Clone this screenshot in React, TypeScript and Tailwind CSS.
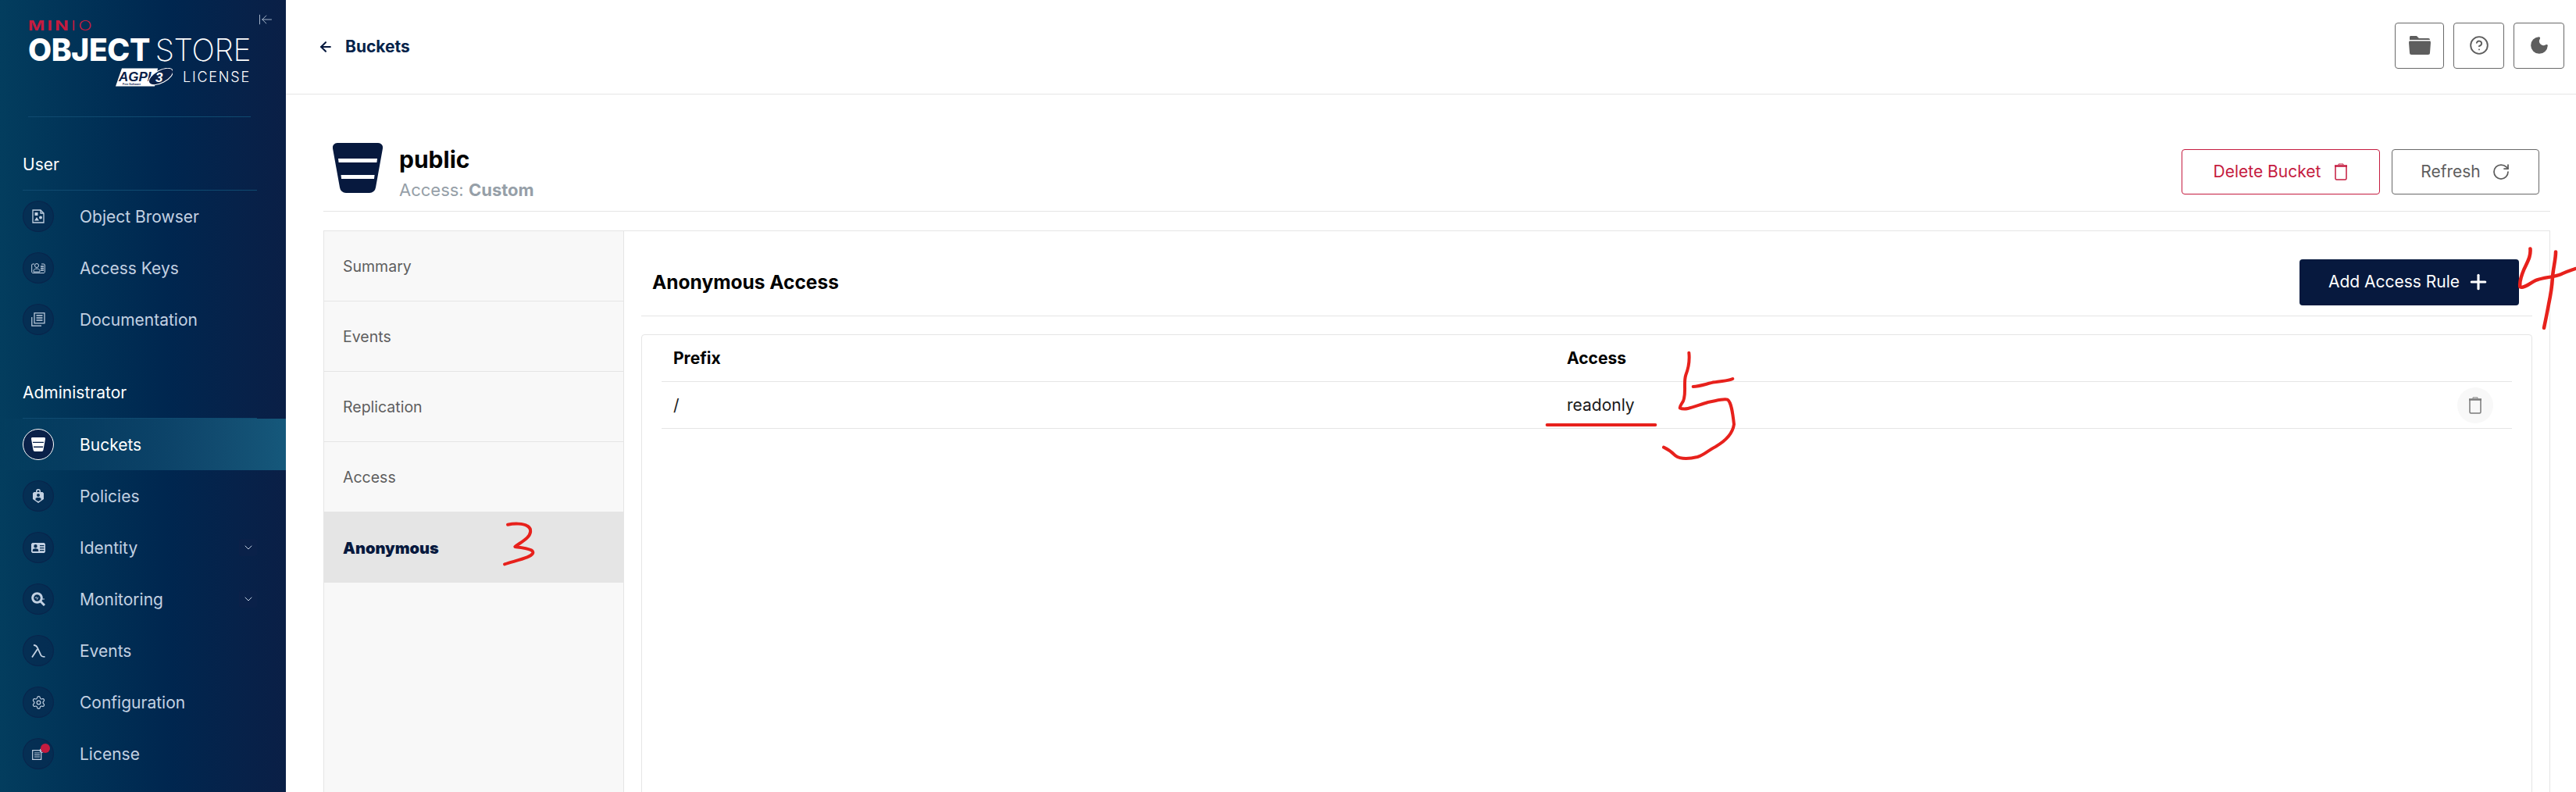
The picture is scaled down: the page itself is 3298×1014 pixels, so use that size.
import React from 'react';
import { ArrowLeft, ArrowLeftToLine, ChevronDown, CircleHelp, Moon, Plus, RotateCw, Settings } from 'lucide-react';

const BucketIcon = ({ className }: { className?: string }) => (
  <svg viewBox="0 0 64 64" className={className} fill="currentColor">
    <path fillRule="evenodd" d="M6 0H58a6 6 0 0 1 6 7L55 57a8 8 0 0 1-8 7H17a8 8 0 0 1-8-7L0 7a6 6 0 0 1 6-7ZM7 20l.6 5H56.400l.6-5ZM10.500 41l.6 5H53l.6-5Z" />
  </svg>
);

const TrashIcon = ({ className }: { className?: string }) => (
  <svg viewBox="0 0 18 22" className={className} fill="none" stroke="currentColor">
    <path d="M1 3.500h16" strokeWidth="2.500" />
    <path d="M6 2V1h6v1" strokeWidth="1" />
    <path d="M2 4v15.500A1.500 1.500 0 0 0 3.500 21h11a1.500 1.500 0 0 0 1.500-1.500V4" strokeWidth="1.500" />
  </svg>
);

const ObjectIcon = () => (
  <svg viewBox="0 0 16 18" className="w-[16px] h-[18px]" fill="none" stroke="currentColor" strokeWidth="1.300">
    <path d="M1 1h10l4 4v12H1Z" />
    <path d="M11 1v4h4" />
    <rect x="3.500" y="4" width="4" height="4" fill="currentColor" stroke="none" />
    <circle cx="11" cy="10.500" r="2" fill="currentColor" stroke="none" />
    <path d="M6 10l3 4.500H3Z" fill="currentColor" stroke="none" />
  </svg>
);

const KeysIcon = () => (
  <svg viewBox="0 0 18 14" className="w-[18px] h-[14px]" fill="none" stroke="currentColor" strokeWidth="1">
    <path d="M4 2H1.500L.7 3v9.500l.8 1h15l.8-1V3l-.8-1H13" />
    <circle cx="7" cy="4" r="2.500" />
    <path d="M3 12v-1.500C3 9 5 8 7 8s4 1 4 2.500V12Z" />
    <path d="M12 5h4M12 7.500h4M12 10h4" strokeWidth="1.400" />
  </svg>
);

const DocsIcon = () => (
  <svg viewBox="0 0 18 18" className="w-[18px] h-[18px]" fill="none" stroke="currentColor" strokeWidth="1.200">
    <path d="M.8 6v11.200H13" />
    <rect x="4" y=".8" width="13" height="13" />
    <path d="M6.500 4h8M6.500 7h8M6.500 10h8" strokeWidth="1.400" />
  </svg>
);

const PolicyIcon = () => (
  <svg viewBox="0 0 14 18" className="w-[14px] h-[18px]" fill="currentColor">
    <path fillRule="evenodd" d="M4 4V3a3 3 0 0 1 6 0v1h2.500L14 5.500V13l-7 5-7-5V5.500L1.500 4ZM5.500 4h3V3a1.500 1.500 0 0 0-3 0ZM7 6a2 2 0 1 0 0 4 2 2 0 0 0 0-4ZM3.500 14l3.500 2 3.500-2v-1.500C10.500 11.500 9 11 7 11s-3.500.5-3.500 1.500Z" />
  </svg>
);

const IdentityIcon = () => (
  <svg viewBox="0 0 18 13" className="w-[18px] h-[13px]" fill="currentColor">
    <path fillRule="evenodd" d="M1.500 0h15L18 1.500v10L16.500 13h-15L0 11.500v-10ZM5.500 2a2.200 2.200 0 1 0 0 4.400 2.200 2.200 0 0 0 0-4.400ZM1.800 11h7.400V9.500C9.200 8 7.500 7.300 5.500 7.300S1.800 8 1.800 9.500ZM11 3v1.300h5.500V3ZM11 6v1.300h5.500V6ZM11 9v1.300h5.500V9Z" />
  </svg>
);

const MonitorIcon = () => (
  <svg viewBox="0 0 18 18" className="w-[18px] h-[18px]" fill="none" stroke="currentColor">
    <circle cx="7.500" cy="7.500" r="5.800" strokeWidth="3" />
    <path d="M11.500 11.500l5.500 5.500" strokeWidth="3" />
    <path d="M5 8l1.500-2 1 3.500 1.500-3" strokeWidth=".8" />
    <path d="M14 9h3" strokeWidth="1" />
  </svg>
);

const LambdaIcon = () => (
  <svg viewBox="0 0 18 17" className="w-[18px] h-[17px]" fill="none" stroke="currentColor" strokeWidth="1.800">
    <path d="M3 1c3 0 4 1 5 3.500L12.500 14c.5 1.300 1.500 1.800 5 1.800" />
    <path d="M8 6L1 16.500" />
  </svg>
);

const LicenseIcon = () => (
  <svg viewBox="0 0 16 15" className="w-[16px] h-[15px]" fill="none" stroke="currentColor" strokeWidth="1.200">
    <path d="M.7 2.700h11v11.600H.7Z" />
    <path d="M3 6h7M3 8.500h7M3 11h7" />
    <circle cx="12.500" cy="3" r="2.500" strokeWidth="1" />
  </svg>
);

const Side = ({ label, icon, active, chevron, dot }: { label: string; icon: React.ReactNode; active?: boolean; chevron?: boolean; dot?: boolean }) => (
  <div className={`h-[66px] flex items-center pl-[29px] pr-[37px] ${active ? 'bg-gradient-to-r from-transparent to-[#15587b] text-white' : 'text-[#c3d1e2]'}`}>
    <div className={`relative w-[40px] h-[40px] rounded-full flex items-center justify-center shrink-0 ${active ? 'bg-[#0a2149] border border-white' : 'bg-[#0a2149]/40 border border-[#0a2149]/70'}`}>
      {icon}
      {dot && <span className="absolute top-[6px] right-[4px] w-[12px] h-[12px] rounded-full bg-[#c51b3f]" />}
    </div>
    <span className="ml-[33px] text-[21px] leading-none">{label}</span>
    {chevron && (
      <span className="ml-auto w-[23px] h-[22px] rounded-[2px] bg-[#0a2149] flex items-center justify-center">
        <ChevronDown size={16} strokeWidth={1.5} />
      </span>
    )}
  </div>
);

const Section = ({ label }: { label: string }) => (
  <div className="mt-[45px] mx-[29px] w-[300px] pb-[16px] border-b border-[#0f4a70] text-white text-[21px] leading-[32px]">{label}</div>
);

const Logo = () => (
  <div className="relative h-[150px] mx-[36px] w-[285px] border-b border-[#0f4a70] text-white">
    <div className="pt-[23px] h-[45px] text-[#c51b3f] text-[17px] leading-[20px] font-bold tracking-[0.14em]">
      <span className="inline-block origin-left scale-x-[1.35]">MIN<span className="font-light">IO</span></span>
    </div>
    <div className="flex justify-between h-[38px] text-[39px] leading-[38px] tracking-[-0.01em]">
      <span className="font-extrabold">OBJECT</span>
      <span className="font-extralight">STORE</span>
    </div>
    <div className="flex items-center justify-end h-[30px] mt-[1px]">
      <svg viewBox="0 0 73 24" className="w-[73px] h-[24px] mr-[13px]">
        <path d="M8 .500H54L50 23.500H0Z" fill="#fff" />
        <text x="4" y="17" fontFamily="Liberation Sans" fontSize="17" fontStyle="italic" fontWeight="700" fill="#0a2149">AGPL</text>
        <text x="9" y="22" fontFamily="Liberation Sans" fontSize="3.500" fontWeight="700" fill="#0a2149">Free Software</text>
        <ellipse cx="58" cy="11" rx="17" ry="8" transform="rotate(-28 58 11)" fill="#0a2149" stroke="#fff" strokeWidth="1" />
        <text x="51" y="18" fontFamily="Liberation Sans" fontSize="17" fontWeight="700" fontStyle="italic" fill="#fff">3</text>
      </svg>
      <span className="text-[18px] leading-none tracking-[0.1em] font-light">LICENSE</span>
    </div>
  </div>
);

const Scribbles = () => (
  <>
    <svg viewBox="0 0 1500 1362" className="absolute left-[400px] top-[560px] w-[500px] h-[454px]" fill="none" stroke="#e7211c" strokeWidth="12" strokeLinecap="round" strokeLinejoin="round">
      <path d="M750 335C775 330 810 330 825 340C845 352 838 372 825 385C810 400 790 410 778 420C795 422 825 425 840 433C855 442 845 452 825 460C800 470 765 478 738 487" />
    </svg>
    <svg viewBox="0 0 1562 870" preserveAspectRatio="none" className="absolute left-[2750px] top-[290px] w-[548px] h-[290px]" fill="none" stroke="#e7211c" strokeWidth="13" strokeLinecap="round" strokeLinejoin="round">
      <path d="M1395 85C1398 115 1385 135 1372 165C1362 190 1355 215 1358 232C1372 240 1395 215 1420 205C1450 195 1480 195 1510 182C1530 172 1545 168 1560 162" />
      <path d="M1488 97C1488 130 1478 160 1476 200C1474 240 1468 270 1462 300C1456 335 1450 365 1445 390" />
    </svg>
    <svg viewBox="0 0 1200 660" className="absolute left-[1900px] top-[400px] w-[400px] h-[220px]" fill="none" stroke="#e7211c" strokeWidth="12" strokeLinecap="round" strokeLinejoin="round">
      <path d="M242 432H658" />
      <path d="M787 155C790 185 785 215 775 240C765 270 778 310 765 340C760 350 752 358 752 367C775 378 810 360 860 345C890 340 920 330 935 335C950 345 955 385 960 430C955 465 925 495 890 515C860 530 850 545 820 555C790 562 755 565 735 550C720 535 705 525 690 518" />
      <path d="M803 285C830 285 860 272 885 268C910 262 935 265 955 255" />
    </svg>
  </>
);

export default function App() {
  return (
    <div className="relative flex h-screen w-full overflow-hidden bg-white text-black font-['Inter',sans-serif]">
      <aside className="relative w-[366px] shrink-0 bg-gradient-to-r from-[#033d5e] via-[#00264f] via-60% to-[#0a1f46]">
        <Logo />
        <button className="absolute top-[15px] right-[16px] text-[#c3d1e2]">
          <ArrowLeftToLine size={20} strokeWidth={1} />
        </button>
        <Section label="User" />
        <Side label="Object Browser" icon={<ObjectIcon />} />
        <Side label="Access Keys" icon={<KeysIcon />} />
        <Side label="Documentation" icon={<DocsIcon />} />
        <Section label="Administrator" />
        <Side label="Buckets" active icon={<BucketIcon className="w-[18px] h-[18px]" />} />
        <Side label="Policies" icon={<PolicyIcon />} />
        <Side label="Identity" chevron icon={<IdentityIcon />} />
        <Side label="Monitoring" chevron icon={<MonitorIcon />} />
        <Side label="Events" icon={<LambdaIcon />} />
        <Side label="Configuration" icon={<Settings size={19} strokeWidth={1.5} />} />
        <Side label="License" dot icon={<LicenseIcon />} />
      </aside>

      <main className="flex-1 min-w-0 flex flex-col">
        <div className="h-[121px] shrink-0 flex items-center justify-between border-b border-[#e5e5e5] pl-[41px] pr-[15px]">
          <div className="flex items-center text-[#07193e]">
            <ArrowLeft size={20} strokeWidth={2.5} />
            <span className="ml-[15px] text-[21px] font-bold text-[#04234a]">Buckets</span>
          </div>
          <div className="flex gap-[12px] text-[#5e5e5e] -mt-[4px]">
            <button className="w-[63px] h-[59px] border border-[#696969] rounded-[4px] flex items-center justify-center">
              <svg viewBox="0 0 28 24" className="w-[28px] h-[24px]" fill="currentColor">
                <path d="M2 0h8l3 3h12a2 2 0 0 1 2 2H1V2a2 2 0 0 1 1-2Z" />
                <path d="M.5 6.500h27l.5 2-1 13a2.500 2.500 0 0 1-2.500 2.500h-21A2.500 2.500 0 0 1 1 21.500L0 8.500Z" />
              </svg>
            </button>
            <button className="w-[65px] h-[59px] border border-[#696969] rounded-[4px] flex items-center justify-center">
              <CircleHelp size={26} strokeWidth={1.75} />
            </button>
            <button className="w-[65px] h-[59px] border border-[#696969] rounded-[4px] flex items-center justify-center">
              <Moon size={26} fill="currentColor" />
            </button>
          </div>
        </div>

        <div className="flex-1 min-h-0 flex flex-col pl-[48px] pr-[33px]">
          <div className="h-[150px] shrink-0 flex items-center border-b border-[#e5e5e5] pt-[38px] pl-[12px] pr-[14px]">
            <BucketIcon className="w-[64px] h-[64px] text-[#07193e]" />
            <div className="ml-[21px] mt-[14px]">
              <div className="text-[30px] leading-[42px] font-bold text-black">public</div>
              <div className="text-[22px] leading-[36px] text-[#969fa8]">Access: <span className="font-bold">Custom</span></div>
            </div>
            <div className="ml-auto mt-[10px] flex items-center gap-[15px] text-[21px]">
              <button className="w-[254px] h-[58px] border border-[#c51b3f] rounded-[4px] text-[#c51b3f] flex items-center justify-center gap-[17px]">
                Delete Bucket
                <TrashIcon className="w-[18px] h-[22px]" />
              </button>
              <button className="w-[189px] h-[58px] border border-[#696969] rounded-[4px] text-[#5e5e5e] flex items-center justify-center gap-[14px]">
                Refresh
                <RotateCw size={24} strokeWidth={1.75} />
              </button>
            </div>
          </div>

          <div className="mt-[24px] flex-1 min-h-0 flex border-t border-r border-[#e5e5e5]">
            <div className="w-[385px] shrink-0 bg-[#f8f8f8] border-x border-[#e5e5e5] text-[19.500px] text-[#5e5e5e]">
              {['Summary', 'Events', 'Replication', 'Access'].map((tab) => (
                <div key={tab} className="h-[90px] flex items-center pl-[24px] pt-[2px] border-b border-[#e5e5e5]">{tab}</div>
              ))}
              <div className="h-[90px] flex items-center pl-[24px] pt-[2px] bg-[#e5e5e5] text-[20px] font-black text-[#07193e]">Anonymous</div>
            </div>

            <div className="flex-1 min-w-0 flex flex-col px-[22px]">
              <div className="h-[109px] shrink-0 flex items-center justify-between border-b border-[#e5e5e5] pt-[22px] pl-[14px] pr-[17px]">
                <span className="text-[24.500px] font-bold">Anonymous Access</span>
                <button className="w-[281px] h-[59px] rounded-[4px] bg-[#07193e] text-white text-[21px] flex items-center justify-center gap-[9px]">
                  Add Access Rule
                  <Plus size={30} strokeWidth={2.5} />
                </button>
              </div>
              <div className="mt-[23px] flex-1 border border-[#e5e5e5] rounded-[4px] px-[25px] -mb-[8px]">
                <div className="h-[60px] grid grid-cols-[1144px_1fr] items-center border-b border-[#e5e5e5] px-[15px] text-[21px] font-bold">
                  <span>Prefix</span>
                  <span>Access</span>
                </div>
                <div className="h-[60px] grid grid-cols-[1144px_1fr_46px] items-center border-b border-[#e5e5e5] pl-[15px] pr-[24px] text-[21px] text-[#1a1a1a]">
                  <span>/</span>
                  <span>readonly</span>
                  <span className="w-[46px] h-[46px] rounded-full bg-[#f8f8f8] flex items-center justify-center text-[#7a7a7a]">
                    <TrashIcon className="w-[18px] h-[22px]" />
                  </span>
                </div>
              </div>
            </div>
          </div>
        </div>
      </main>
      <Scribbles />
    </div>
  );
}
